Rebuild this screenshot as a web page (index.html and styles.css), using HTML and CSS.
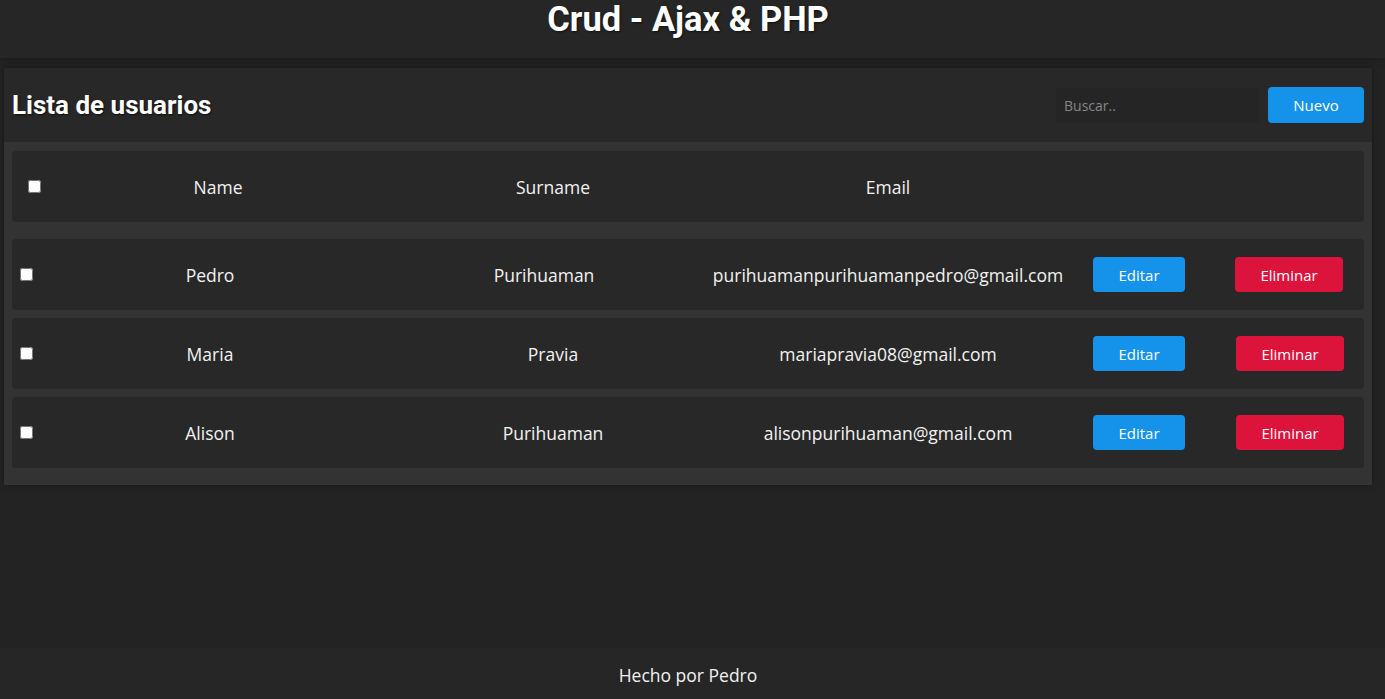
FILE: index.html
```html
<!DOCTYPE html>
<html lang="es">
<head>
<meta charset="utf-8">
<title>Crud - Ajax &amp; PHP</title>
<link rel="stylesheet" href="styles.css">
</head>
<body>
<header class="site-header">
  <h1 class="site-title">Crud - Ajax &amp; PHP</h1>
</header>
<main class="panel">
  <div class="panel-top">
    <h2 class="panel-title">Lista de usuarios</h2>
    <div class="panel-actions">
      <input class="search" type="text" placeholder="Buscar..">
      <button class="btn btn-blue btn-new">Nuevo</button>
    </div>
  </div>
  <div class="table-area">
    <div class="row row-head">
      <div class="cell cell-check"><input type="checkbox"></div>
      <div class="cell">Name</div>
      <div class="cell">Surname</div>
      <div class="cell">Email</div>
      <div class="cell"></div>
      <div class="cell"></div>
    </div>
    <div class="rows">
      <div class="row row-data row-wide">
        <div class="cell cell-check"><input type="checkbox"></div>
        <div class="cell">Pedro</div>
        <div class="cell">Purihuaman</div>
        <div class="cell">purihuamanpurihuamanpedro@gmail.com</div>
        <div class="cell"><button class="btn btn-blue btn-edit">Editar</button></div>
        <div class="cell cell-end"><button class="btn btn-red btn-del">Eliminar</button></div>
      </div>
      <div class="row row-data">
        <div class="cell cell-check"><input type="checkbox"></div>
        <div class="cell">Maria</div>
        <div class="cell">Pravia</div>
        <div class="cell">mariapravia08@gmail.com</div>
        <div class="cell"><button class="btn btn-blue btn-edit">Editar</button></div>
        <div class="cell"><button class="btn btn-red btn-del">Eliminar</button></div>
      </div>
      <div class="row row-data">
        <div class="cell cell-check"><input type="checkbox"></div>
        <div class="cell">Alison</div>
        <div class="cell">Purihuaman</div>
        <div class="cell">alisonpurihuaman@gmail.com</div>
        <div class="cell"><button class="btn btn-blue btn-edit">Editar</button></div>
        <div class="cell"><button class="btn btn-red btn-del">Eliminar</button></div>
      </div>
    </div>
  </div>
</main>
<footer class="site-footer">Hecho por Pedro</footer>
</body>
</html>
```

FILE: styles.css
```css
* { box-sizing: border-box; }

html, body { height: 100%; }

body {
  margin: 0;
  background: #232323;
  color: #f2f2f2;
  font-family: "Open Sans", "Liberation Sans", sans-serif;
  display: flex;
  flex-direction: column;
  min-height: 100vh;
}

.site-header {
  height: 58px;
  background: #262626;
  display: flex;
  justify-content: center;
  padding-right: 9px;
  box-shadow: 0 2px 6px rgba(0,0,0,0.25);
}

.site-title {
  margin: 0;
  font-family: Roboto, "Liberation Sans", sans-serif;
  font-weight: 700;
  font-size: 34.5px;
  line-height: 39px;
  color: #fff;
  text-shadow: 1px 1px 2px rgba(0,0,0,0.6);
}

.panel {
  margin: 10px 13px 0 4px;
  background: #282828;
  box-shadow: 0 0 5px rgba(0,0,0,0.35);
}

.panel-top {
  height: 74px;
  padding: 0 8px;
  display: flex;
  align-items: center;
  justify-content: space-between;
}

.panel-title {
  margin: 0;
  font-family: Roboto, "Liberation Sans", sans-serif;
  font-weight: 700;
  font-size: 26px;
  color: #fff;
  text-shadow: 1px 1px 2px rgba(0,0,0,0.6);
}

.panel-actions {
  display: flex;
  align-items: center;
  gap: 9px;
}

.search {
  width: 203px;
  height: 35px;
  border: none;
  border-radius: 2px;
  background: #252525;
  padding: 0 8px;
  font-family: "Open Sans", "Liberation Sans", sans-serif;
  font-size: 14px;
  color: #ddd;
  outline: none;
}

.search::placeholder { color: #858585; }

.btn {
  border: none;
  border-radius: 4px;
  height: 35px;
  color: #fff;
  font-family: "Open Sans", "Liberation Sans", sans-serif;
  font-size: 15px;
  padding: 0;
}

.btn-blue { background: #1592e9; }
.btn-red { background: #dc143c; }

.btn-new { width: 96px; height: 36px; font-size: 15px; }
.btn-edit { width: 92px; }
.btn-del { width: 108px; }

.table-area {
  background: #333333;
  padding: 9px 8px 17px 8px;
}

.row {
  display: grid;
  height: 71px;
  align-items: center;
  background: #282828;
  border-radius: 4px;
  padding-right: 12px;
  font-size: 17.5px;
}

.row-head {
  grid-template-columns: 44px 324px 346px 324px 178px 124px;
  margin-bottom: 17px;
}

.row-data {
  grid-template-columns: 28px 340px 346px 324px 178px 124px;
}

.row-wide {
  grid-template-columns: 28px 340px 328px 360px 142px 154px;
  padding-right: 0;
}

.rows {
  display: flex;
  flex-direction: column;
  gap: 8px;
}

.cell {
  display: flex;
  justify-content: center;
  white-space: nowrap;
  min-width: 0;
}

.cell-end {
  justify-content: flex-end;
  padding-right: 21px;
}

.cell-check { justify-content: flex-start; }

.row-head .cell-check { padding-left: 16px; }
.row-data .cell-check { padding-left: 8px; }

.cell-check input {
  margin: 0;
  width: 13px;
  height: 13px;
}

.site-footer {
  margin-top: auto;
  height: 51px;
  background: #262626;
  display: flex;
  align-items: center;
  justify-content: center;
  font-size: 17.5px;
  color: #f2f2f2;
  padding-top: 3px;
  padding-right: 9px;
}
```
